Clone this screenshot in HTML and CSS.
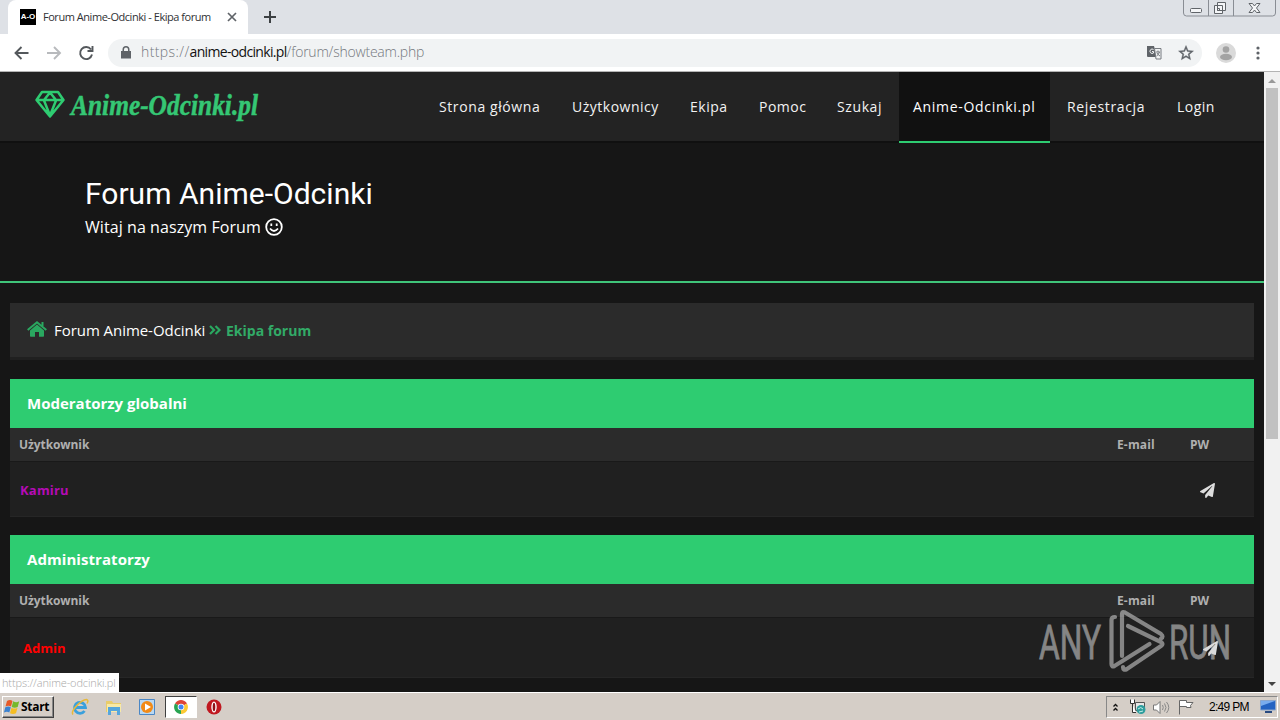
FILE: index.html
```html
<!DOCTYPE html>
<html lang="pl">
<head>
<meta charset="utf-8">
<title>Forum Anime-Odcinki - Ekipa forum</title>
<link rel="stylesheet" href="styles.css">
</head>
<body>
<svg width="0" height="0" class="defs">
  <symbol id="plane" viewBox="0 0 512 512"><path d="M476 3.200 12.500 270.600c-18.100 10.400-15.800 35.600 2.200 43.200L121 358.400l287.300-253.200c5.500-4.900 13.300 2.600 8.600 8.300L176 407v80.500c0 23.600 28.500 32.900 42.500 15.800L282 426l124.600 52.200c14.200 6 30.400-2.900 33-18.200l72-432C515 7.800 493.300-6.800 476 3.200z"/></symbol>
</svg>
<div class="tabstrip">
  <div class="tab">
    <span class="favicon">A-O</span>
    <span class="tab-title">Forum Anime-Odcinki - Ekipa forum</span>
    <svg class="tab-close" width="10" height="10" viewBox="0 0 10 10"><path d="M1 1l8 8M9 1l-8 8"/></svg>
  </div>
  <svg class="new-tab" width="12" height="12" viewBox="0 0 12 12"><path d="M6 0v12M0 6h12"/></svg>
  <svg class="win-controls" width="94" height="17" viewBox="0 0 94 17">
    <path class="frame" d="M.5 0v13q0 3 3 3h86q3 0 3-3V0M25.500 0v16M50.500 0v16"/>
    <rect class="glyph" x="7.500" y="8.500" width="11" height="4" rx="1"/>
    <path class="glyph" d="M34.500 2.500h8v8h-8zM31.500 5.500h8v8h-8zM34.500 8.500h2v2h-2z"/>
    <path class="glyph" d="M66 3.500h3.500l2 2.500 2-2.500H77L73.500 8l3.500 4.500h-3.500l-2-2.500-2 2.500H66L69.500 8z"/>
  </svg>
</div>
<div class="toolbar">
  <svg class="nav-icons" width="80" height="16" viewBox="0 0 80 16">
    <path d="M14.500 8H1.500M7.500 2l-6 6 6 6"/>
    <path class="off" d="M33 8h13M40 2l6 6-6 6"/>
    <path d="M77 4.500A6 6 0 1 0 78 9.500M78.500 1v5h-5"/>
  </svg>
  <div class="omnibox">
    <svg width="10" height="13" viewBox="0 0 10 13"><path fill="#5f6368" d="M0 5h1.500V3.500a3.500 3.500 0 0 1 7 0V5H10v7.500H0zM3 5h4V3.500a2 2 0 0 0-4 0z"/></svg>
    <span class="url"><span class="scheme">https://</span><b>anime-odcinki.pl</b>/forum/showteam.php</span>
    <svg class="translate" width="15" height="15" viewBox="0 0 15 15"><path fill="#5f6368" d="M0 1h7l3 11H1q-1 0-1-1z"/><path fill="#f1f3f4" stroke="#777b80" d="M7.500 3.500h6.500v10.500H9z"/><path fill="none" stroke="#777b80" d="M9 7h4M11 5.500V7M12.500 7q-1 3-3 4M10 8q1 2 3 3"/><path fill="none" stroke="#f1f3f4" d="M6.500 4.500a2.200 2.200 0 1 0 0 3.500V6.500H5"/></svg>
    <svg class="star" width="18" height="18" viewBox="0 0 24 24"><path fill="#5f6368" stroke="#5f6368" stroke-width=".5" d="M22 9.240l-7.190-.62L12 2 9.190 8.630 2 9.240l5.460 4.730L5.820 21 12 17.270 18.180 21l-1.630-7.030L22 9.240zM12 15.400l-3.760 2.270 1-4.280-3.320-2.880 4.380-.38L12 6.100l1.710 4.040 4.380.38-3.320 2.880 1 4.280L12 15.400z"/></svg>
  </div>
  <svg class="avatar" width="20" height="20" viewBox="0 0 20 20"><circle cx="10" cy="10" r="10" fill="#dadada"/><circle cx="10" cy="6.500" r="3.300" fill="#a3a3a3"/><ellipse cx="10" cy="14" rx="6" ry="3.200" fill="#a3a3a3"/></svg>
  <svg class="dots" width="4" height="14" viewBox="0 0 4 14"><circle cx="2" cy="2" r="1.600"/><circle cx="2" cy="7" r="1.600"/><circle cx="2" cy="12" r="1.600"/></svg>
</div>
<div class="viewport">
  <div class="page">
    <header class="header">
      <svg class="logo" width="240" height="50" viewBox="0 0 240 50">
        <path d="M9 6h16l5.500 8L17 30.500 3.500 14zM3.500 14h27M11 14.500l6 15 6-15M17 6.500L11 14M17 6.500l6 7.500"/>
        <text x="38" y="29" textLength="187" lengthAdjust="spacingAndGlyphs">Anime-Odcinki.pl</text>
      </svg>
      <nav class="nav">
        <a class="n1">Strona główna</a><a class="n2">Użytkownicy</a><a class="n3">Ekipa</a><a class="n4">Pomoc</a><a class="n5">Szukaj</a><a class="n6 active">Anime-Odcinki.pl</a><a class="n7">Rejestracja</a><a class="n8">Login</a>
      </nav>
    </header>
    <section class="hero">
      <h1>Forum Anime-Odcinki</h1>
      <p><span>Witaj na naszym Forum</span><svg width="18" height="18" viewBox="0 0 18 18"><circle cx="9" cy="9" r="7.800"/><path d="M5 10.500q4 5 8 0"/><path class="eye" d="M6.300 5.500v2.600M11.700 5.500v2.600"/></svg></p>
    </section>
    <div class="crumbs">
      <svg class="house" width="20" height="16" viewBox="0 0 20 16"><path fill="#2aa860" d="M10 3.500L17 9.500V15q0 .7-.8.7H12V11H8v4.700H3.800Q3 15.700 3 15V9.500z"/><path fill="none" stroke="#2aa860" stroke-width="2" d="M.7 9L10 1.300 19.300 9M15.500 1v4"/></svg>
      <span class="home">Forum Anime-Odcinki</span>
      <svg class="chev" width="12" height="10" viewBox="0 0 12 10"><path d="M1 1l4 4-4 4M6.500 1l4 4-4 4"/></svg>
      <strong>Ekipa forum</strong>
    </div>
    <section class="group">
      <h2 class="t1">Moderatorzy globalni</h2>
      <div class="cols"><span class="user">Użytkownik</span><span class="mail">E-mail</span><span class="pw">PW</span></div>
      <div class="row"><b class="mod">Kamiru</b><svg width="15" height="15"><use href="#plane"/></svg></div>
    </section>
    <section class="group">
      <h2 class="t2">Administratorzy</h2>
      <div class="cols"><span class="user">Użytkownik</span><span class="mail">E-mail</span><span class="pw">PW</span></div>
      <div class="row tall"><b class="admin">Admin</b><svg width="15" height="15"><use href="#plane"/></svg></div>
    </section>
  </div>
  <div class="scrollbar"><i class="up"></i><div class="thumb"></div><i class="down"></i></div>
  <div class="status">https://anime-odcinki.pl</div>
  <svg class="watermark" width="204" height="72" viewBox="0 0 204 72">
    <text x="1" y="50" textLength="62" lengthAdjust="spacingAndGlyphs">ANY</text>
    <text x="131" y="50" textLength="62" lengthAdjust="spacingAndGlyphs">RUN</text>
    <path d="M77 8q-3.500 0-3.500 3v44q0 3.500 3 2l35-22M84 47V5q0-3 3-1.500L123 25q3 2.500 0 4.500M90 17l33 16q3 2 0 4L89 60q-4 2-4-2"/>
  </svg>
</div>
<div class="taskbar">
  <div class="start">
    <svg width="16" height="16" viewBox="0 0 16 16"><path fill="#e65a28" d="M3 2q3-2 5.500 0L7 7.500Q4.500 6 1.500 7.500z"/><path fill="#76b82a" d="M9.200 2.300q3 1.700 6 0L13.700 8q-3 1.500-6 0z"/><path fill="#3b82d0" d="M1.300 8.300q3-1.500 5.500 0L5.300 13.500Q3 12-.1 13.500z"/><path fill="#f5bd22" d="M7.500 8.700q3 1.700 6 0L12 14.200q-3 1.500-6 0z"/></svg>
    <b>Start</b>
  </div>
  <svg class="ql ie" width="18" height="18" viewBox="0 0 18 18"><path fill="none" stroke="#3aa0dc" stroke-width="2.800" d="M4.500 9.500h10A5.500 5.500 0 1 0 13.500 13"/><path fill="none" stroke="#e8b93a" stroke-width="1.500" d="M2 16.500C-1 13 10 2 15.500 1.500q2.500.5.500 4"/></svg>
  <svg class="ql" width="18" height="18" viewBox="0 0 18 18"><path fill="#e9cc6a" d="M1 3h6l1 2h8v9H1z"/><path fill="#f8e9a6" d="M2 6h14v8H2z"/><path fill="#56a6dc" d="M3 9h12v8h-3v-4H6v4H3z"/></svg>
  <svg class="ql" width="16" height="16" viewBox="0 0 16 16"><path fill="#b9d8f2" stroke="#4b87c5" d="M.5.500h15v15H.5z"/><circle cx="8" cy="8" r="6" fill="#f28a16"/><path fill="#fff" d="M6 4.500v7L12 8z"/></svg>
  <div class="task"><svg width="14" height="14" viewBox="0 0 14 14"><path fill="#de4437" d="M7 7L1 3.500a7 7 0 0 1 12 0z"/><path fill="#28a452" d="M7 7v7A7 7 0 0 1 1 3.500z"/><path fill="#fcc934" d="M7 7l6-3.500A7 7 0 0 1 7 14z"/><circle cx="7" cy="7" r="3.300" fill="#fff"/><circle cx="7" cy="7" r="2.500" fill="#4285f4"/></svg></div>
  <svg class="ql opera" width="16" height="16" viewBox="0 0 16 16"><circle cx="8" cy="8" r="7.500" fill="#c01820"/><ellipse cx="8" cy="8" rx="2.700" ry="5.500" fill="#fff"/><ellipse cx="8" cy="8" rx="1.300" ry="4.300" fill="#901018"/></svg>
  <div class="tray">
    <svg class="up2" width="5" height="9" viewBox="0 0 5 9"><path d="M.5 3.500l2-2 2 2M.5 7.500l2-2 2 2"/></svg>
    <svg class="net" width="16" height="16" viewBox="0 0 16 16"><path fill="#e8e8e8" stroke="#555" d="M5.500 3.500h9v8h-9z"/><path fill="#fff" stroke="#333" d="M.5.500v4h4v-4M2.500 5v8.500H6"/><circle cx="11" cy="10.500" r="4.500" fill="#2f9d9d"/><path stroke="#c8f0e8" fill="none" d="M8 10q3-3 5 0M9 13l4-1"/></svg>
    <svg class="vol" width="17" height="15" viewBox="0 0 17 15"><path fill="#fff" stroke="#777" d="M.5 5h3L7 1.500v12L3.500 10h-3z"/><path fill="none" stroke="#888" d="M9.500 5q1.500 2.500 0 5M11.500 3.500q3 4 0 8M13.500 2q4.500 5.500 0 11"/></svg>
    <svg class="flag" width="17" height="16" viewBox="0 0 17 16"><path fill="#fff" stroke="#666" d="M1.500 15.500V1.500h7v2h6.500l-2.500 3 .5 2H8.500V7.500h-7"/></svg>
    <span class="clock">2:49 PM</span>
    <svg class="desk" width="17" height="14" viewBox="0 0 17 14"><path fill="#2463c2" stroke="#8ba6cc" d="M.5.500h15v9.500H.5z"/><path fill="#79acee" d="M1 1h14L1 6z"/><path fill="#284a80" d="M5 11h7v2H5z"/></svg>
  </div>
</div>
</body>
</html>
```
FILE: styles.css
```css
* { box-sizing: border-box; }
body { margin: 0; width: 1280px; height: 720px; overflow: hidden; display: flex; flex-direction: column; font-family: "Open Sans", sans-serif; background: #161616; }
svg { display: block; flex: none; }
.defs { position: absolute; }

.tabstrip { height: 34px; flex: none; background: #dee1e6; display: flex; align-items: center; padding-left: 8px; }
.tab { width: 240px; height: 34px; background: #fff; border-radius: 8px 8px 0 0; display: flex; align-items: center; padding-left: 12px; }
.favicon { width: 16px; height: 16px; background: #000; color: #fff; font: bold 8px/16px "Liberation Sans", sans-serif; text-align: center; }
.tab-title { margin-left: 7px; width: 184px; white-space: nowrap; color: #303134; font: 11px/16px "Open Sans", sans-serif; letter-spacing: -0.46px; }
.tab-close path { stroke: #5f6368; stroke-width: 1.700; }
.new-tab { margin-left: 16px; }
.new-tab path { stroke: #3c4043; stroke-width: 2; }
.win-controls { margin-left: auto; margin-right: 3px; align-self: flex-start; }
.win-controls .frame { fill: none; stroke: #898d94; }
.win-controls .glyph { fill: #f4f5f7; stroke: #606469; }

.toolbar { height: 38px; flex: none; background: #fff; border-bottom: 1px solid #b4b4b4; display: flex; align-items: center; }
.nav-icons { margin-left: 14px; }
.nav-icons path { fill: none; stroke: #54585c; stroke-width: 1.900; }
.nav-icons .off { stroke: #b8babd; }
.omnibox { width: 1094px; height: 28px; margin-left: 14px; border-radius: 14px; background: #f1f3f4; display: flex; align-items: center; padding-left: 13px; }
.url { margin: -2px 0 0 10px; color: #74787d; font: 300 14px/20px "Open Sans", sans-serif; letter-spacing: -0.21px; white-space: nowrap; }
.scheme { letter-spacing: 0.4px; }
.url b { color: #111; font-weight: 400; letter-spacing: -0.67px; }
.translate { margin-left: auto; }
.star { margin: 0 7px 0 15px; }
.avatar { margin-left: 14px; }
.dots { margin-left: 20px; fill: #5f6368; }

.viewport { position: relative; height: 620px; flex: none; display: flex; overflow: hidden; }
.page { width: 1264px; background: #161616; overflow: hidden; }
.header { height: 71px; background: #232323; border-bottom: 2px solid #101010; display: flex; }
.logo { margin: 14px 0 0 33px; }
.logo path { fill: none; stroke: #2ecc71; stroke-width: 2.500; stroke-linejoin: round; }
.logo text { fill: #35c774; stroke: #35c774; stroke-width: 0.5; font: italic bold 30px "Liberation Serif", serif; }
.nav { margin-left: auto; height: 71px; display: flex; padding-right: 35px; }
.nav a { padding-left: 14px; height: 71px; line-height: 70px; font-size: 14px; letter-spacing: 0.5px; color: #f2f2f2; white-space: nowrap; }
.nav .n1 { width: 133px; letter-spacing: 0.6px; }
.n2 { width: 118px; }
.n3 { width: 69px; }
.n4 { width: 78px; }
.nav .n5 { width: 76px; letter-spacing: 0.6px; }
.nav .n6 { width: 151px; letter-spacing: 0.7px; }
.nav .n7 { width: 110px; margin-left: 3px; letter-spacing: 0.65px; }
.n8 { width: 66px; }
.nav .active { background: #111; border-bottom: 2px solid #2ecc71; color: #fff; }
.hero { height: 140px; border-bottom: 2px solid #3fc479; padding: 31px 0 0 85px; color: #fff; }
.hero h1 { margin: 0; font: 400 30px/40px Roboto, sans-serif; letter-spacing: 0.02px; }
.hero p { margin: 1px 0 0; display: flex; align-items: center; gap: 4px; font-size: 16px; line-height: 24px; letter-spacing: 0.07px; }
.hero circle, .hero path { fill: none; stroke: #fff; stroke-width: 1.800; }
.crumbs { margin: 20px 10px 0; height: 57px; background: #2b2b2b; border-bottom: 3px solid #202020; display: flex; align-items: center; padding-left: 17px; font-size: 15px; }
.house { margin-top: -2px; }
.crumbs .home { margin-left: 7px; width: 155px; letter-spacing: -0.05px; color: #fff; white-space: nowrap; }
.chev path { fill: none; stroke: #2aa860; stroke-width: 2.200; }
.crumbs strong { margin-left: 5px; color: #32aa67; font-size: 14px; }
.group { margin: 19px 10px 0; }
.group + .group { margin-top: 18px; }
.group h2 { margin: 0; height: 49px; padding-left: 17px; background: #2ecc71; color: #fff; font: bold 15px/49px "Open Sans", sans-serif; }
.group .t2 { letter-spacing: 0.07px; }
.cols { height: 34px; background: #2b2b2b; border-bottom: 1px solid #191919; display: flex; align-items: center; padding-left: 9px; color: #b0b0b0; font: bold 12px/33px "Open Sans", sans-serif; }
.user { width: 1098px; letter-spacing: -0.08px; }
.mail { width: 73px; letter-spacing: 0.15px; }
.row { height: 55px; background: #202020; border-bottom: 1px solid #262626; display: flex; align-items: center; justify-content: space-between; padding: 2px 39px 0 10px; font-size: 13px; fill: #ddd; }
.tall { height: 60px; padding: 1px 36px 0 13px; }
.mod { color: #b50bb5; letter-spacing: 0.2px; }
.admin { color: #f00; }
.scrollbar { width: 16px; background: #f1f1f1; display: flex; flex-direction: column; align-items: center; padding: 7px 0 6px; }
.up { border: 4px solid transparent; border-top: 0; border-bottom: 4px solid #999; }
.thumb { width: 12px; height: 351px; margin-top: 5px; background: #c1c1c1; }
.down { margin-top: auto; border: 4px solid transparent; border-bottom: 0; border-top: 4px solid #444; }
.status { position: absolute; left: 0; bottom: 0; width: 119px; height: 19px; background: #fff; padding-left: 2px; color: #a8a8a8; font: 300 11px/19px "Open Sans", sans-serif; letter-spacing: -0.12px; white-space: nowrap; }
.watermark { position: absolute; left: 1038px; top: 537px; opacity: 0.55; }
.watermark text { fill: #d8d8d8; stroke: #d8d8d8; stroke-width: 0.8; font: 49px Roboto, sans-serif; }
.watermark path { fill: none; stroke: #d8d8d8; stroke-width: 4.200; stroke-linecap: round; }

.taskbar { height: 28px; flex: none; background: #d5cec7; border-top: 1px solid #fff; display: flex; align-items: center; padding: 1px 2px 0; }
.start { width: 52px; height: 22px; border: 1px solid; border-color: #fff #404040 #404040 #fff; box-shadow: inset -1px -1px #888; display: flex; align-items: center; gap: 1px; padding-left: 1px; font: 12px/20px "Open Sans", sans-serif; letter-spacing: -0.3px; }
.ql { margin-left: 16px; }
.ie { margin-left: 17px; }
.task { width: 32px; height: 22px; margin-left: 10px; background: #fff; border: 1px solid; border-color: #404040 #fff #fff #404040; display: flex; align-items: center; justify-content: center; }
.opera { margin-left: 9px; }
.tray { margin-left: auto; width: 172px; height: 22px; border: 1px solid; border-color: #888 #fff #fff #888; display: flex; align-items: center; padding-left: 6px; }
.up2 path { fill: none; stroke: #111; stroke-width: 1.300; }
.net { margin-left: 12px; }
.vol { margin-left: 7px; }
.flag { margin-left: 8px; }
.clock { margin-left: 14px; width: 51px; font: 12px/20px "Liberation Sans", sans-serif; letter-spacing: -0.7px; white-space: nowrap; }
```
